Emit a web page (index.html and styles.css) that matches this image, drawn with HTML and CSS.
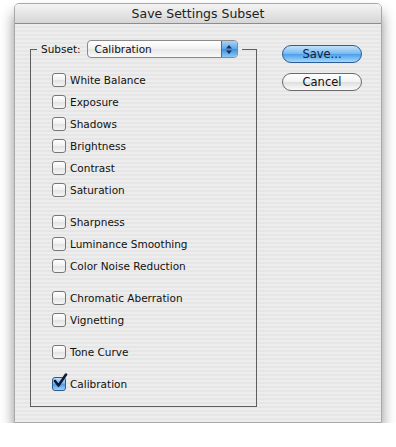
FILE: index.html
```html
<!DOCTYPE html>
<html lang="en">
<head>
    <meta charset="UTF-8">
    <title>Save Settings Subset</title>
    <link rel="stylesheet" href="styles.css">
</head>
<body>
    <div class="window">
        <div class="titlebar">Save Settings Subset</div>

        <div class="content">
            <fieldset class="group">
                <legend class="subset">
                    <span class="subset-label">Subset:</span>
                    <div class="popup">
                        <span class="popup-value">Calibration</span>
                        <span class="popup-arrows">
                            <svg width="8" height="11" viewBox="0 0 8 11">
                                <path d="M4 1 L7 4.5 L1 4.5 Z" fill="#1c2f55"/>
                                <path d="M4 10 L7 6.5 L1 6.5 Z" fill="#1c2f55"/>
                            </svg>
                        </span>
                    </div>
                </legend>

                <div class="checks">
                    <label class="check"><span class="box"></span>White Balance</label>
                    <label class="check"><span class="box"></span>Exposure</label>
                    <label class="check"><span class="box"></span>Shadows</label>
                    <label class="check"><span class="box"></span>Brightness</label>
                    <label class="check"><span class="box"></span>Contrast</label>
                    <label class="check"><span class="box"></span>Saturation</label>

                    <label class="check gap"><span class="box"></span>Sharpness</label>
                    <label class="check"><span class="box"></span>Luminance Smoothing</label>
                    <label class="check"><span class="box"></span>Color Noise Reduction</label>

                    <label class="check gap"><span class="box"></span>Chromatic Aberration</label>
                    <label class="check"><span class="box"></span>Vignetting</label>

                    <label class="check gap"><span class="box"></span>Tone Curve</label>

                    <label class="check gap">
                        <span class="box checked">
                            <svg class="tick" width="16" height="16" viewBox="0 0 16 16">
                                <path d="M3 8 L6.5 12.5 L14 1.5" fill="none" stroke="#0d1a33" stroke-width="2.6" stroke-linecap="round" stroke-linejoin="round"/>
                            </svg>
                        </span>Calibration
                    </label>
                </div>
            </fieldset>

            <div class="buttons">
                <button class="btn btn-default">Save...</button>
                <button class="btn">Cancel</button>
            </div>
        </div>
    </div>
</body>
</html>
```

FILE: styles.css
```css
* {
    margin: 0;
    padding: 0;
    box-sizing: border-box;
}

body {
    background: #fff;
    font-family: "DejaVu Sans", Verdana, sans-serif;
    font-size: 10.5px;
    color: #111;
}

.window {
    width: 368px;
    height: 420px;
    margin: 3px 0 0 14px;
    border-radius: 5px 5px 0 0;
    border: 1px solid #a8a8a8;
    box-shadow: 0 10px 14px rgba(0, 0, 0, 0.45);
    overflow: hidden;
    display: flex;
    flex-direction: column;
}

.titlebar {
    height: 20px;
    line-height: 20px;
    text-align: center;
    font-size: 12.5px;
    color: #222;
    background: linear-gradient(#f4f4f4, #d6d6d6);
    border-bottom: 1px solid #8c8c8c;
}

.content {
    flex: 1;
    display: flex;
    align-items: flex-start;
    padding: 16px 0 0 15px;
    background: repeating-linear-gradient(#ededed 0, #ededed 2px, #e6e6e6 2px, #e6e6e6 4px);
}

/* Group box */
.group {
    width: 227px;
    height: 367px;
    border: 1px solid #5e5e5e;
    padding: 11px 0 0 21px;
}

.subset {
    display: flex;
    align-items: center;
    margin-left: -15px;
    padding: 0 4px 0 4px;
}

.subset-label {
    margin-right: 6px;
}

.popup {
    width: 151px;
    height: 18px;
    display: flex;
    align-items: center;
    border: 1px solid #8a8a8a;
    border-radius: 4px;
    background: linear-gradient(#ffffff, #f1f1f1 50%, #e6e6e6 51%, #fafafa);
    overflow: hidden;
}

.popup-value {
    flex: 1;
    padding-left: 7px;
}

.popup-arrows {
    width: 16px;
    height: 100%;
    display: flex;
    align-items: center;
    justify-content: center;
    background: linear-gradient(#a9d3f7, #5aa7e8 50%, #3a8fdc 51%, #8cc8f6);
    border-left: 1px solid #3a6ea8;
}

/* Checkboxes */
.checks {
    display: flex;
    flex-direction: column;
}

.check {
    display: flex;
    align-items: center;
    height: 22px;
}

.check.gap {
    margin-top: 10px;
}

.box {
    position: relative;
    width: 14px;
    height: 14px;
    margin-right: 4px;
    border: 1px solid #777;
    border-radius: 3px;
    background: linear-gradient(#ffffff, #f0f0f0 50%, #e2e2e2 51%, #f6f6f6);
}

.box.checked {
    border-color: #2c5a93;
    background: linear-gradient(#bfe0fb, #6db3ef 50%, #4a9be6 51%, #9fd2fa);
}

.tick {
    position: absolute;
    left: -1px;
    top: -5px;
}

/* Buttons */
.buttons {
    display: flex;
    flex-direction: column;
    gap: 10px;
    margin: 5px 0 0 25px;
}

.btn {
    width: 80px;
    height: 18px;
    border: 1px solid #6b6b6b;
    border-radius: 9px;
    font-family: "DejaVu Sans", Verdana, sans-serif;
    font-size: 11.5px;
    color: #111;
    background: linear-gradient(#ffffff, #f2f2f2 50%, #dedede 51%, #fbfbfb);
}

.btn-default {
    border-color: #2c5d95;
    color: #0c1d3b;
    background: linear-gradient(#c4e3fb, #75b9f0 50%, #4b9ee8 51%, #a6d8fb);
}
```
